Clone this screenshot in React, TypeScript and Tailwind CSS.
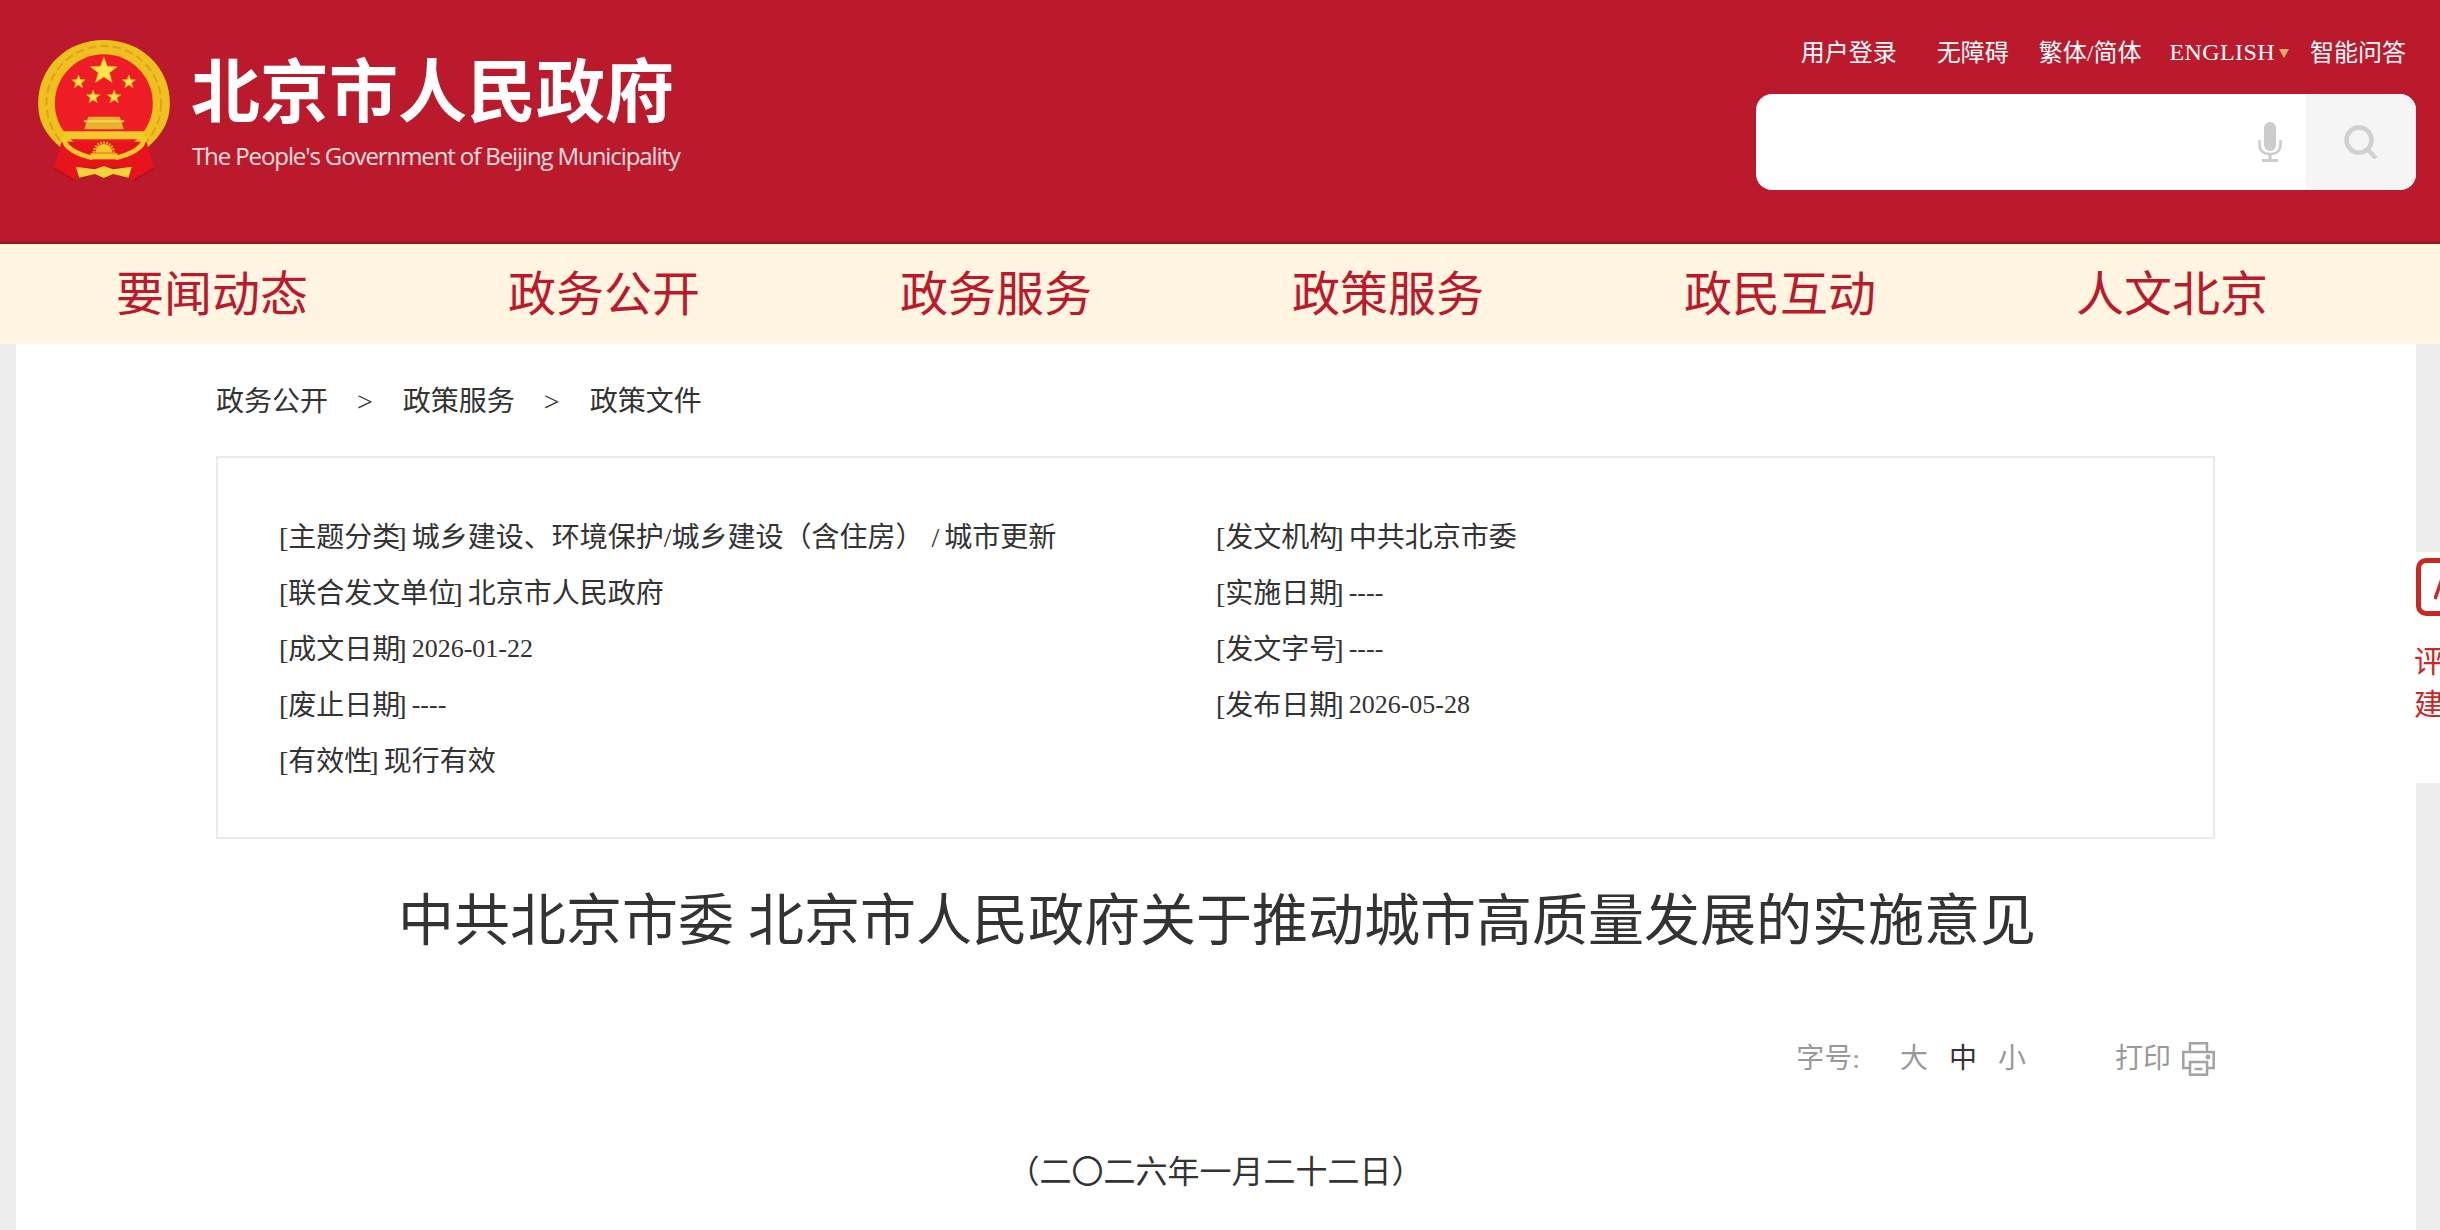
// App.tsx
import React from 'react'

const serif = "font-['Liberation_Serif','Noto_Sans_CJK_SC',serif]"

const navItems = ['要闻动态', '政务公开', '政务服务', '政策服务', '政民互动', '人文北京']

const Star = ({ cx, cy, r }: { cx: number; cy: number; r: number }) => {
  const pts = Array.from({ length: 10 }, (_, i) => {
    const a = (Math.PI / 5) * i - Math.PI / 2
    const d = i % 2 === 0 ? r : r * 0.42
    return `${cx + d * Math.cos(a)},${cy + d * Math.sin(a)}`
  }).join(' ')
  return <polygon points={pts} fill="#fbe34a" stroke="#e8b21a" strokeWidth="2" />
}

const Emblem = () => (
  <svg viewBox="55 60 395 435" className="w-[132px] h-[145px] shrink-0">
    <path d="M125 385 C72 340 55 300 55 250 C55 140 142 60 252 60 C362 60 450 140 450 250 C450 300 432 340 380 385 Z" fill="#f0c020" />
    <circle cx="252" cy="250" r="172" fill="none" stroke="#e0a21c" strokeWidth="6" strokeDasharray="26 12" />
    <circle cx="252" cy="250" r="147" fill="#ee1c25" />
    <Star cx={252} cy={153} r={42} />
    <Star cx={176} cy={186} r={21} />
    <Star cx={327} cy={186} r={21} />
    <Star cx={220} cy={231} r={21} />
    <Star cx={283} cy={231} r={21} />
    <path d="M125 365 L103 445 L165 482 L200 440 H305 L340 482 L402 445 L380 365 Z" fill="#e8141c" />
    <path d="M103 445 L165 482 M402 445 L340 482" stroke="#b5121a" strokeWidth="6" />
    <path d="M205 290 H300 L312 328 H193 Z" fill="#e8b230" />
    <path d="M192 304 H313" stroke="#f6d24a" strokeWidth="6" />
    <path d="M130 334 H375 L368 358 H137 Z" fill="#f4c92a" />
    <path d="M130 350 C132 388 178 404 218 414" fill="none" stroke="#f4c92a" strokeWidth="14" />
    <path d="M375 350 C373 388 327 404 287 414" fill="none" stroke="#f4c92a" strokeWidth="14" />
    <path d="M226 398 A26 26 0 0 1 278 398 Z" fill="#f4c92a" />
    <path d="M222 398 A30 30 0 0 1 282 398" fill="none" stroke="#f4c92a" strokeWidth="7" strokeDasharray="5 4" />
    <rect x="212" y="400" width="81" height="18" fill="#f4c92a" />
    <path d="M168 440 L225 448 L252 438 L280 448 L336 440 L326 473 L280 462 L252 474 L225 462 L178 473 Z" fill="#f4d23a" />
  </svg>
)

const MicIcon = () => (
  <svg viewBox="0 0 24 40" className="w-[24px] h-[40px]" fill="none">
    <rect x="6" y="0" width="12" height="29" rx="6" fill="#cccccc" />
    <path d="M1.5 18 V22 C1.5 29 6 32 12 32 C18 32 22.5 29 22.5 22 V18" stroke="#cccccc" strokeWidth="2.5" />
    <path d="M12 32 V38" stroke="#cccccc" strokeWidth="3" />
    <rect x="4" y="37" width="16" height="3" fill="#cccccc" />
  </svg>
)

const SearchIcon = () => (
  <svg viewBox="0 0 34 34" className="w-[34px] h-[34px]" fill="none" stroke="#d0d0d0">
    <circle cx="15" cy="15" r="12.5" strokeWidth="4.5" />
    <path d="M24 25 L32 33" strokeWidth="4.5" />
  </svg>
)

const PrinterIcon = () => (
  <svg viewBox="0 0 33 34" className="w-[33px] h-[34px] shrink-0" fill="none" stroke="#a3a3a3" strokeWidth="2.5">
    <path d="M8 10 V1.3 H25 V10" />
    <path d="M8 26 H1.3 V10 H31.7 V26 H25" />
    <rect x="8" y="20" width="17" height="12.7" />
    <path d="M12.5 27 H20.5" />
    <circle cx="26" cy="15" r="1.2" fill="#a3a3a3" />
  </svg>
)

const InfoRow = ({ label, value, latin }: { label: string; value: React.ReactNode; latin?: boolean }) => (
  <p className="h-[56px] leading-[56px] whitespace-nowrap">
    <span className="-ml-[1px]">[</span>
    {label}
    <span className="-ml-[3px] -mr-[2px] inline-block">]</span>{' '}
    <span className={latin ? 'text-[26px] inline-block -translate-y-[2px]' : ''}>{value}</span>
  </p>
)

const App = () => {
  return (
    <div className={`${serif} relative w-[2440px] h-[1230px] overflow-hidden bg-[#ededed] text-[#333333]`}>
      <header className="h-[244px] bg-[#bb1a2d] border-b-[3px] border-[#9e1525] flex justify-between pl-[38px] pr-[24px]">
        <div className="flex items-start pt-[40px] gap-[21px]">
          <Emblem />
          <div className="text-white">
            <h1 className="mt-[3px] text-[69px] leading-[88px] font-bold whitespace-nowrap font-['Noto_Sans_CJK_SC',sans-serif]">
              北京市人民政府
            </h1>
            <p className="mt-[10px] ml-[1px] text-[24px] leading-[30px] tracking-[-1.1px] text-white/85 whitespace-nowrap font-['Open_Sans',sans-serif]">
              The People's Government of Beijing Municipality
            </p>
          </div>
        </div>
        <div className="w-[660px]">
          <div className="h-[94px] flex items-start pt-[37px] justify-end pr-[10px] text-white text-[24px] leading-[32px] whitespace-nowrap">
            <a>用户登录</a>
            <a className="ml-[40px]">无障碍</a>
            <a className="ml-[30px]">繁体/简体</a>
            <a className="ml-[28px] flex items-center tracking-[0.4px] -translate-y-[1px]">
              ENGLISH
              <span className="ml-[4px] mt-[2px] border-x-[5px] border-t-[9px] border-x-transparent border-t-[#d8ad70]" />
            </a>
            <a className="ml-[21px]">智能问答</a>
          </div>
          <div className="h-[96px] rounded-[16px] overflow-hidden bg-white flex">
            <div className="flex-1 flex items-center justify-end pr-[24px]">
              <MicIcon />
            </div>
            <div className="w-[110px] bg-[#f5f5f5] flex items-center justify-center">
              <SearchIcon />
            </div>
          </div>
        </div>
      </header>

      <nav className="h-[100px] bg-[#fff5e0] pl-[16px] flex">
        {navItems.map((item) => (
          <a key={item} className="w-[392px] text-center text-[48px] leading-[102px] text-[#bb1a2d] whitespace-nowrap">
            {item}
          </a>
        ))}
      </nav>

      <main className="mx-[16px] w-[2400px] h-[886px] bg-white pl-[200px]">
        <div className="pt-[30px] h-[84px] flex text-[28px] leading-[56px] whitespace-nowrap">
          <span>政务公开</span>
          <span className="ml-[29px]">&gt;</span>
          <span className="ml-[30px]">政策服务</span>
          <span className="ml-[29px]">&gt;</span>
          <span className="ml-[30px]">政策文件</span>
        </div>

        <section className="mt-[28px] w-[1999px] h-[383px] border-2 border-[#ebebe4] pt-[52px] pl-[62px] flex text-[28px]">
          <div className="w-[937px]">
            <InfoRow
              label="主题分类"
              value={
                <>
                  城乡建设、环境保护/城乡建设（含住房）
                  <span className="ml-[8px] mr-[5px]">/</span>
                  城市更新
                </>
              }
            />
            <InfoRow label="联合发文单位" value="北京市人民政府" />
            <InfoRow label="成文日期" value="2026-01-22" latin />
            <InfoRow label="废止日期" value="----" latin />
            <InfoRow label="有效性" value="现行有效" />
          </div>
          <div>
            <InfoRow label="发文机构" value="中共北京市委" />
            <InfoRow label="实施日期" value="----" latin />
            <InfoRow label="发文字号" value="----" latin />
            <InfoRow label="发布日期" value="2026-05-28" latin />
          </div>
        </section>

        <div className="w-[1999px]">
          <h2 className="mt-[42px] pl-[3px] text-center text-[56px] leading-[80px] font-normal whitespace-nowrap">
            中共北京市委 北京市人民政府关于推动城市高质量发展的实施意见
          </h2>

          <div className="mt-[78px] h-[40px] flex justify-end items-center text-[28px] leading-[40px] text-[#999999]">
            <span>字号:</span>
            <span className="ml-[40px]">大</span>
            <span className="ml-[21px] text-[#333333]">中</span>
            <span className="ml-[21px]">小</span>
            <span className="ml-[89px]">打印</span>
            <span className="ml-[11px]">
              <PrinterIcon />
            </span>
          </div>

          <p className="mt-[69px] text-center text-[32px] leading-[48px]">（二〇二六年一月二十二日）</p>
        </div>
      </main>

      <aside className="absolute left-[2416px] top-[552px] w-[24px] h-[231px] bg-white">
        <div className="relative w-[60px] h-[58px] mt-[6px] border-[5px] border-[#c8281f] rounded-[10px]">
          <svg viewBox="0 0 10 30" className="absolute left-[13px] top-[14px] w-[10px] h-[30px]">
            <path d="M1 22 L8 2" stroke="#c8281f" strokeWidth="3.5" fill="none" />
          </svg>
        </div>
        <p className="w-[60px] -ml-[2px] mt-[24px] text-[30px] leading-[43px] text-[#c8281f]">
          评论
          <br />
          建议
        </p>
      </aside>
    </div>
  )
}

export default App
